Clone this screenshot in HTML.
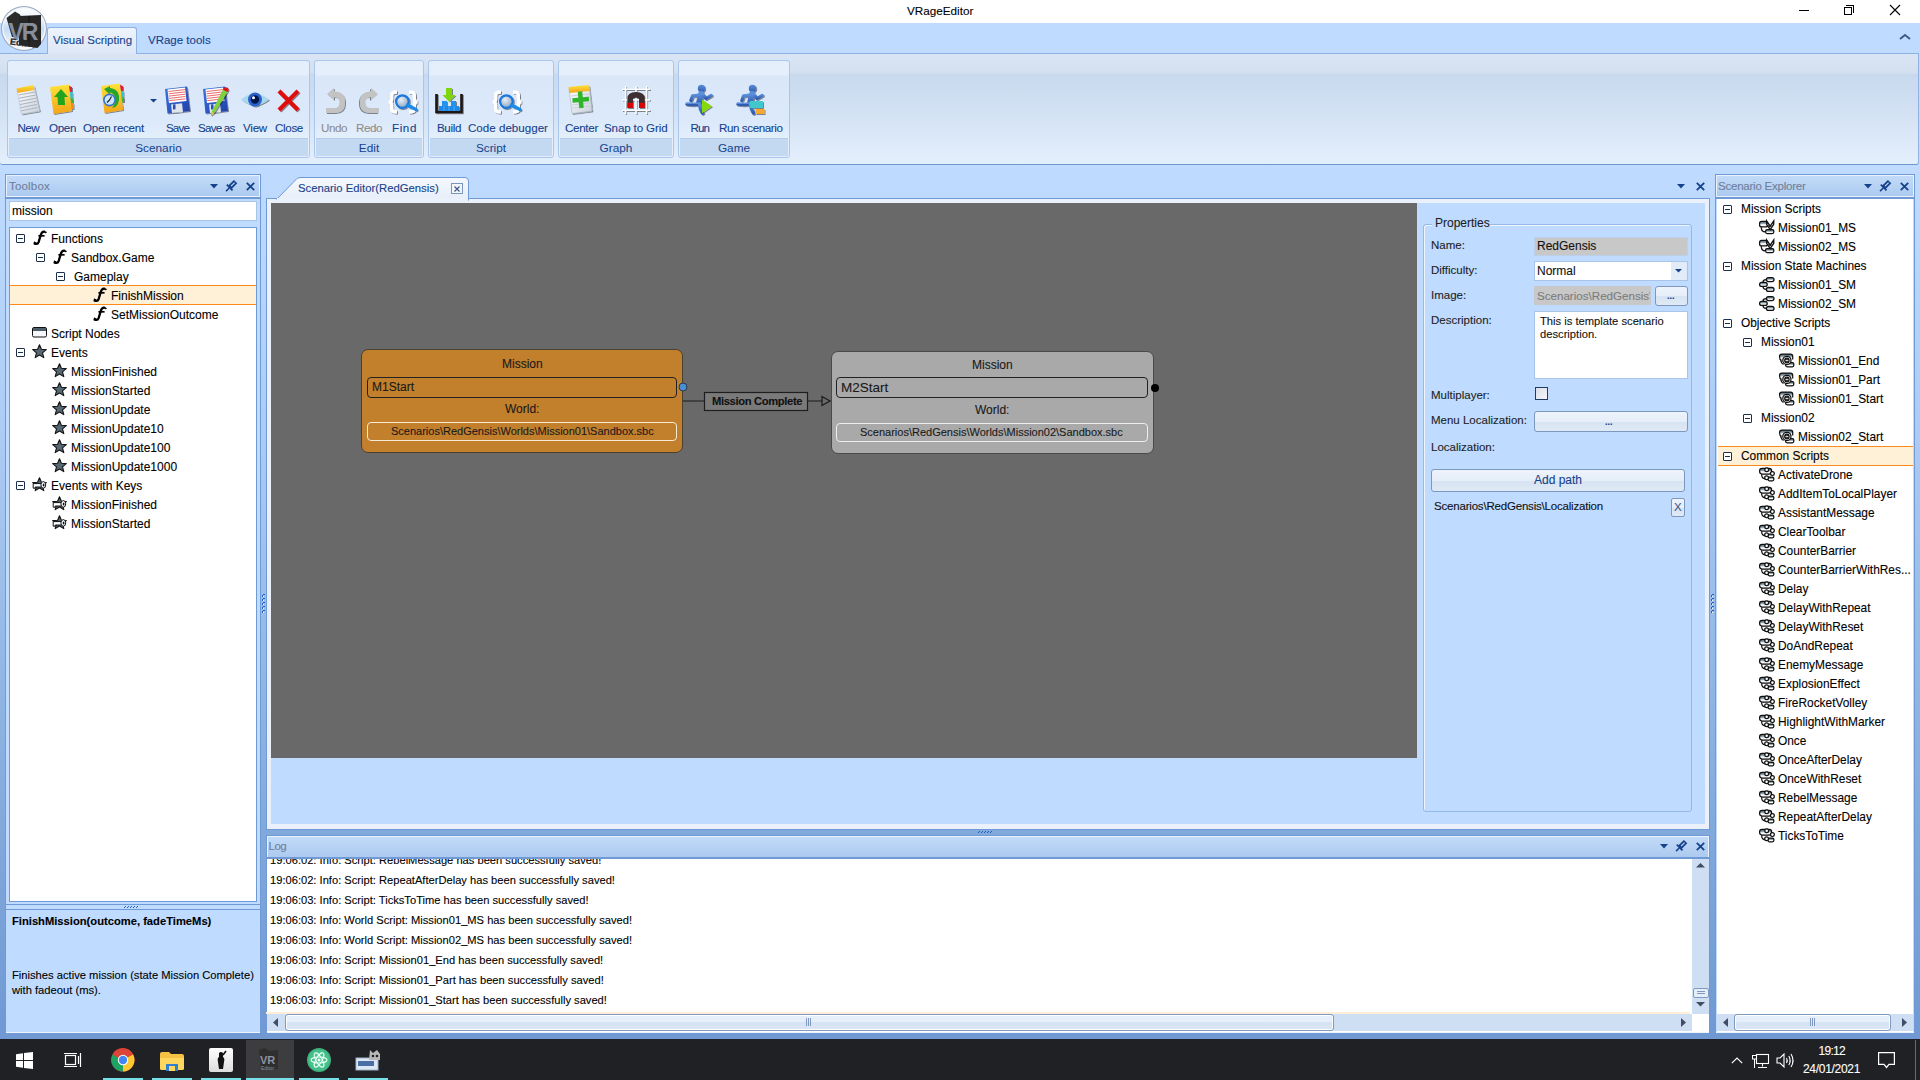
<!DOCTYPE html><html><head><meta charset="utf-8"><style>*{box-sizing:border-box;margin:0;padding:0}
html,body{width:1920px;height:1080px;overflow:hidden;background:#bfdbff;font-family:"Liberation Sans",sans-serif;font-size:12px;color:#000}
.a{position:absolute}
svg.a{overflow:visible}
.t{position:absolute;white-space:nowrap;line-height:1;-webkit-text-stroke:0.1px currentColor}
.grp{position:absolute;top:60px;height:98px;border:1px solid #a9c6ec;border-radius:3px;background:linear-gradient(#e5effc 0,#e5effc 14px,#d9e7f9 15px,#dce9fa 60px,#e5effc 78px)}
.grp .cap{position:absolute;left:1px;right:1px;bottom:1px;height:18px;background:#c3d8f1;border-top:1px solid #b5cdea;color:#15428b;text-align:center;font-size:11.8px;line-height:19px}
.btn{position:absolute;top:122px;color:#15428b;font-size:11.5px;line-height:1;white-space:nowrap}
.dis{color:#8d8d8d}
.pcap{position:absolute;height:23px;border:1px solid #6f9ad6;border-bottom:none;background:linear-gradient(#c3dbf9,#abc9ef)}
.pcap .inner{position:absolute;left:0;top:0;right:0;bottom:0;border:1px solid #e8f1fc;border-bottom:1px solid #e8f1fc}
.exp{position:absolute;width:9px;height:9px;border:1px solid #1b2f4a;border-radius:1px;background:#fff}
.exp:after{content:"";position:absolute;left:1px;top:3px;width:5px;height:1px;background:#1b2f4a}
.tr{position:absolute;white-space:nowrap;font-size:12.2px;line-height:1}
.log{position:absolute;left:270px;font-size:11.2px;line-height:1;white-space:nowrap;color:#000}
.ff{position:absolute;font-family:"Liberation Serif",serif;font-style:italic;font-weight:bold;font-size:19px;line-height:1}
</style></head><body>
<div class="a" style="left:0px;top:0px;width:1920px;height:23px;background:#fff"></div>
<div class="t" style="left:907px;top:5px;font-size:11.7px">VRageEditor</div>
<div class="a" style="left:1799px;top:10px;width:10px;height:1px;background:#000"></div>
<div class="a" style="left:1844px;top:7px;width:8px;height:8px;border:1px solid #000"></div>
<div class="a" style="left:1846px;top:5px;width:8px;height:8px;border-top:1px solid #000;border-right:1px solid #000"></div>
<svg class="a" style="left:1889px;top:4px;" width="12" height="12" viewBox="0 0 12 12"><path d="M1 1L11 11M11 1L1 11" stroke="#000" stroke-width="1.1"/></svg>
<div class="a" style="left:0px;top:23px;width:1920px;height:30px;background:#bfdbff"></div>
<div class="a" style="left:47px;top:27px;width:90px;height:27px;border:1px solid #8db2e3;border-bottom:none;border-radius:3px 3px 0 0;background:linear-gradient(#eef4fc,#dce7f5)"></div>
<div class="t" style="left:53px;top:35px;font-size:11.5px;color:#15428b">Visual Scripting</div>
<div class="t" style="left:148px;top:35px;font-size:11.5px;color:#15428b">VRage tools</div>
<svg class="a" style="left:1899px;top:33px;" width="12" height="8" viewBox="0 0 12 8"><path d="M1 6L6 2L11 6" stroke="#3b5a88" stroke-width="2" fill="none"/></svg>
<div class="a" style="left:0px;top:53px;width:1919px;height:112px;border-top:1px solid #8db2e3;border-bottom:1px solid #6f96cc;border-right:1px solid #8db2e3;border-radius:0 0 3px 3px;background:linear-gradient(#dae5f4 0,#d3e0f0 19px,#c8d9ee 20px,#d3e2f4 60px,#e4effc 110px)"></div>
<div class="a" style="left:48px;top:53px;width:88px;height:1px;background:#dce7f5"></div>
<div class="grp" style="left:7px;width:303px"><div class="cap">Scenario</div></div>
<div class="grp" style="left:314px;width:110px"><div class="cap">Edit</div></div>
<div class="grp" style="left:428px;width:126px"><div class="cap">Script</div></div>
<div class="grp" style="left:558px;width:116px"><div class="cap">Graph</div></div>
<div class="grp" style="left:678px;width:112px"><div class="cap">Game</div></div>
<div class="a" style="left:1px;top:6px;width:46px;height:45px;border-radius:50%;border:1.5px solid #97a6bf;box-shadow:inset 0 0 0 1.5px #f4f7fb;background:linear-gradient(#ffffff 0,#e9f1fb 30%,#c5dbf6 50%,#dbe8f8 70%,#ffffff 100%)"></div>
<div class="t" style="left:17.5px;top:122px;font-size:11.6px;color:#15428b;letter-spacing:-0.569px">New</div>
<div class="t" style="left:49px;top:122px;font-size:11.6px;color:#15428b;letter-spacing:-0.344px">Open</div>
<div class="t" style="left:83px;top:122px;font-size:11.6px;color:#15428b;letter-spacing:-0.258px">Open recent</div>
<div class="t" style="left:166px;top:122px;font-size:11.6px;color:#15428b;letter-spacing:-0.860px">Save</div>
<div class="t" style="left:198px;top:122px;font-size:11.6px;color:#15428b;letter-spacing:-0.774px">Save as</div>
<div class="t" style="left:243px;top:122px;font-size:11.6px;color:#15428b;letter-spacing:-0.234px">View</div>
<div class="t" style="left:275px;top:122px;font-size:11.6px;color:#15428b;letter-spacing:-0.332px">Close</div>
<div class="t" style="left:321px;top:122px;font-size:11.6px;color:#8d8d8d;letter-spacing:-0.433px">Undo</div>
<div class="t" style="left:356px;top:122px;font-size:11.6px;color:#8d8d8d;letter-spacing:-0.433px">Redo</div>
<div class="t" style="left:392px;top:122px;font-size:11.6px;color:#15428b;letter-spacing:0.608px">Find</div>
<div class="t" style="left:437px;top:122px;font-size:11.6px;color:#15428b;letter-spacing:-0.359px">Build</div>
<div class="t" style="left:468px;top:122px;font-size:11.6px;color:#15428b;letter-spacing:0.002px">Code debugger</div>
<div class="t" style="left:565px;top:122px;font-size:11.6px;color:#15428b;letter-spacing:-0.303px">Center</div>
<div class="t" style="left:604px;top:122px;font-size:11.6px;color:#15428b;letter-spacing:-0.136px">Snap to Grid</div>
<div class="t" style="left:690.5px;top:122px;font-size:11.6px;color:#15428b;letter-spacing:-0.927px">Run</div>
<div class="t" style="left:719px;top:122px;font-size:11.6px;color:#15428b;letter-spacing:-0.404px">Run scenario</div>
<div class="a" style="left:0px;top:165px;width:1920px;height:875px;background:linear-gradient(#bfdbff 0,#aecdf6 250px,#98bce8 450px,#7ea6da 700px,#7099d4 875px)"></div>
<div class="a" style="left:5px;top:174px;width:256px;height:859px;background:#bfdbff;border:1px solid #6f9ad6"></div>
<div class="pcap" style="left:5px;top:174px;width:256px"><div class="inner"></div></div>
<div class="a" style="left:5px;top:197px;width:256px;height:2px;background:#6f9ad6"></div>
<div class="t" style="left:9px;top:181px;font-size:11.5px;color:#6f7f9a;letter-spacing:0.194px">Toolbox</div>
<div class="a" style="left:9px;top:201px;width:248px;height:20px;background:#fff;border:1px solid #a9c4e8"></div>
<div class="t" style="left:12px;top:205px;font-size:12px">mission</div>
<div class="a" style="left:9px;top:227px;width:248px;height:675px;background:#fff;border:1px solid #6f9ad6"></div>
<div class="a" style="left:6px;top:904px;width:254px;height:1px;background:#6f9ad6"></div>
<div class="a" style="left:6px;top:909px;width:254px;height:1px;background:#6f9ad6"></div>
<div class="t" style="left:12px;top:916px;font-size:11.2px;font-weight:bold">FinishMission(outcome, fadeTimeMs)</div>
<div class="t" style="left:12px;top:970px;font-size:11.2px">Finishes active mission (state Mission Complete)</div>
<div class="t" style="left:12px;top:985px;font-size:11.2px">with fadeout (ms).</div>
<div class="a" style="left:266px;top:198px;width:1444px;height:632px;border:1px solid #6f9ad6;background:#eaf1fb"></div>
<div class="a" style="left:271px;top:203px;width:1434px;height:621px;background:#bfdbff"></div>
<div class="a" style="left:271px;top:203px;width:1146px;height:555px;background:#696969"></div>
<div class="a" style="left:266px;top:835px;width:1444px;height:198px;background:#fff;border:1px solid #6f9ad6"></div>
<div class="pcap" style="left:266px;top:835px;width:1444px"><div class="inner"></div></div>
<div class="a" style="left:266px;top:857px;width:1444px;height:2px;background:#6f9ad6"></div>
<div class="t" style="left:268.5px;top:841px;font-size:11.5px;color:#6f7f9a;letter-spacing:-0.463px">Log</div>
<div class="a" style="left:1715px;top:174px;width:200px;height:859px;background:#bfdbff;border:1px solid #6f9ad6"></div>
<div class="pcap" style="left:1715px;top:174px;width:200px"><div class="inner"></div></div>
<div class="a" style="left:1715px;top:197px;width:200px;height:2px;background:#6f9ad6"></div>
<div class="t" style="left:1718px;top:181px;font-size:11.5px;color:#6f7f9a;letter-spacing:-0.224px">Scenario Explorer</div>
<div class="a" style="left:1717px;top:199px;width:196px;height:833px;background:#fff"></div>
<div class="a" style="left:0px;top:1039px;width:1920px;height:41px;background:#1f2125"></div>
<div class="a" style="left:6px;top:1032px;width:254px;height:1px;background:#eef4fc"></div>
<div class="a" style="left:267px;top:1032px;width:1442px;height:1px;background:#eef4fc"></div>
<div class="a" style="left:1716px;top:1032px;width:198px;height:1px;background:#eef4fc"></div>
<div class="a" style="left:10px;top:285px;width:246px;height:20px;background:#fff0d8;border-top:1px solid #ff8a1c;border-bottom:1px solid #ff8a1c"></div>
<div class="exp" style="left:16px;top:234px"></div>
<svg class="a" style="left:33px;top:230px;" width="15" height="15" viewBox="0 0 15 15"><path d="M11.2 1.6Q8.6 1.4 7.6 5.5L5.6 12.2Q4.8 14.6 1.6 13.6" fill="none" stroke="#000" stroke-width="2.3" stroke-linecap="round"/><path d="M10.5 1.5Q12.6 0.8 14 2.2L12.6 3.6Q12.2 2.4 10.8 2.6Z" fill="#000"/><path d="M3 13.2Q1 13.2 0.6 12.5L1.2 11.2Q2 12.3 3.4 12.3Z" fill="#000"/><path d="M5.4 5.8H11.6" stroke="#000" stroke-width="1.7"/></svg>
<div class="t" style="left:51px;top:232.5px;font-size:12px">Functions</div>
<div class="exp" style="left:36px;top:253px"></div>
<svg class="a" style="left:53px;top:249px;" width="15" height="15" viewBox="0 0 15 15"><path d="M11.2 1.6Q8.6 1.4 7.6 5.5L5.6 12.2Q4.8 14.6 1.6 13.6" fill="none" stroke="#000" stroke-width="2.3" stroke-linecap="round"/><path d="M10.5 1.5Q12.6 0.8 14 2.2L12.6 3.6Q12.2 2.4 10.8 2.6Z" fill="#000"/><path d="M3 13.2Q1 13.2 0.6 12.5L1.2 11.2Q2 12.3 3.4 12.3Z" fill="#000"/><path d="M5.4 5.8H11.6" stroke="#000" stroke-width="1.7"/></svg>
<div class="t" style="left:71px;top:251.5px;font-size:12px">Sandbox.Game</div>
<div class="exp" style="left:56px;top:272px"></div>
<div class="t" style="left:74px;top:270.5px;font-size:12px">Gameplay</div>
<svg class="a" style="left:93px;top:287px;" width="15" height="15" viewBox="0 0 15 15"><path d="M11.2 1.6Q8.6 1.4 7.6 5.5L5.6 12.2Q4.8 14.6 1.6 13.6" fill="none" stroke="#000" stroke-width="2.3" stroke-linecap="round"/><path d="M10.5 1.5Q12.6 0.8 14 2.2L12.6 3.6Q12.2 2.4 10.8 2.6Z" fill="#000"/><path d="M3 13.2Q1 13.2 0.6 12.5L1.2 11.2Q2 12.3 3.4 12.3Z" fill="#000"/><path d="M5.4 5.8H11.6" stroke="#000" stroke-width="1.7"/></svg>
<div class="t" style="left:111px;top:289.5px;font-size:12px">FinishMission</div>
<svg class="a" style="left:93px;top:306px;" width="15" height="15" viewBox="0 0 15 15"><path d="M11.2 1.6Q8.6 1.4 7.6 5.5L5.6 12.2Q4.8 14.6 1.6 13.6" fill="none" stroke="#000" stroke-width="2.3" stroke-linecap="round"/><path d="M10.5 1.5Q12.6 0.8 14 2.2L12.6 3.6Q12.2 2.4 10.8 2.6Z" fill="#000"/><path d="M3 13.2Q1 13.2 0.6 12.5L1.2 11.2Q2 12.3 3.4 12.3Z" fill="#000"/><path d="M5.4 5.8H11.6" stroke="#000" stroke-width="1.7"/></svg>
<div class="t" style="left:111px;top:308.5px;font-size:12px">SetMissionOutcome</div>
<svg class="a" style="left:32px;top:327px;" width="15" height="11" viewBox="0 0 15 11"><rect x="0.5" y="0.5" width="14" height="9.5" rx="1.5" fill="#f4f8fa" stroke="#111"/><rect x="1" y="1" width="13" height="3" fill="#4d5e68"/></svg>
<div class="t" style="left:51px;top:327.5px;font-size:12px">Script Nodes</div>
<div class="exp" style="left:16px;top:348px"></div>
<svg class="a" style="left:32px;top:344px;" width="15" height="15" viewBox="0 0 15 15"><path d="M7.5 0.8L9.4 5.3L14.3 5.6L10.5 8.8L11.8 13.6L7.5 11L3.2 13.6L4.5 8.8L0.7 5.6L5.6 5.3Z" fill="#566873" stroke="#111" stroke-width="1.1" stroke-linejoin="round"/></svg>
<div class="t" style="left:51px;top:346.5px;font-size:12px">Events</div>
<svg class="a" style="left:52px;top:363px;" width="15" height="15" viewBox="0 0 15 15"><path d="M7.5 0.8L9.4 5.3L14.3 5.6L10.5 8.8L11.8 13.6L7.5 11L3.2 13.6L4.5 8.8L0.7 5.6L5.6 5.3Z" fill="#566873" stroke="#111" stroke-width="1.1" stroke-linejoin="round"/></svg>
<div class="t" style="left:71px;top:365.5px;font-size:12px">MissionFinished</div>
<svg class="a" style="left:52px;top:382px;" width="15" height="15" viewBox="0 0 15 15"><path d="M7.5 0.8L9.4 5.3L14.3 5.6L10.5 8.8L11.8 13.6L7.5 11L3.2 13.6L4.5 8.8L0.7 5.6L5.6 5.3Z" fill="#566873" stroke="#111" stroke-width="1.1" stroke-linejoin="round"/></svg>
<div class="t" style="left:71px;top:384.5px;font-size:12px">MissionStarted</div>
<svg class="a" style="left:52px;top:401px;" width="15" height="15" viewBox="0 0 15 15"><path d="M7.5 0.8L9.4 5.3L14.3 5.6L10.5 8.8L11.8 13.6L7.5 11L3.2 13.6L4.5 8.8L0.7 5.6L5.6 5.3Z" fill="#566873" stroke="#111" stroke-width="1.1" stroke-linejoin="round"/></svg>
<div class="t" style="left:71px;top:403.5px;font-size:12px">MissionUpdate</div>
<svg class="a" style="left:52px;top:420px;" width="15" height="15" viewBox="0 0 15 15"><path d="M7.5 0.8L9.4 5.3L14.3 5.6L10.5 8.8L11.8 13.6L7.5 11L3.2 13.6L4.5 8.8L0.7 5.6L5.6 5.3Z" fill="#566873" stroke="#111" stroke-width="1.1" stroke-linejoin="round"/></svg>
<div class="t" style="left:71px;top:422.5px;font-size:12px">MissionUpdate10</div>
<svg class="a" style="left:52px;top:439px;" width="15" height="15" viewBox="0 0 15 15"><path d="M7.5 0.8L9.4 5.3L14.3 5.6L10.5 8.8L11.8 13.6L7.5 11L3.2 13.6L4.5 8.8L0.7 5.6L5.6 5.3Z" fill="#566873" stroke="#111" stroke-width="1.1" stroke-linejoin="round"/></svg>
<div class="t" style="left:71px;top:441.5px;font-size:12px">MissionUpdate100</div>
<svg class="a" style="left:52px;top:458px;" width="15" height="15" viewBox="0 0 15 15"><path d="M7.5 0.8L9.4 5.3L14.3 5.6L10.5 8.8L11.8 13.6L7.5 11L3.2 13.6L4.5 8.8L0.7 5.6L5.6 5.3Z" fill="#566873" stroke="#111" stroke-width="1.1" stroke-linejoin="round"/></svg>
<div class="t" style="left:71px;top:460.5px;font-size:12px">MissionUpdate1000</div>
<div class="exp" style="left:16px;top:481px"></div>
<svg class="a" style="left:32px;top:477px;" width="15" height="15" viewBox="0 0 15 15"><path d="M7.5 0.8L9.4 5.3L14.3 5.6L10.5 8.8L11.8 13.6L7.5 11L3.2 13.6L4.5 8.8L0.7 5.6L5.6 5.3Z" fill="#566873" stroke="#111" stroke-width="1.1" stroke-linejoin="round"/><path d="M1.2 6.6H10V10H3.2V11.2H1.2Z" fill="#fff" stroke="#111" stroke-width="1"/><ellipse cx="11.3" cy="7.9" rx="2.4" ry="3.3" fill="#fff" stroke="#111" stroke-width="1"/><ellipse cx="11.6" cy="7.9" rx="0.9" ry="1.5" fill="#111"/></svg>
<div class="t" style="left:51px;top:479.5px;font-size:12px">Events with Keys</div>
<svg class="a" style="left:52px;top:496px;" width="15" height="15" viewBox="0 0 15 15"><path d="M7.5 0.8L9.4 5.3L14.3 5.6L10.5 8.8L11.8 13.6L7.5 11L3.2 13.6L4.5 8.8L0.7 5.6L5.6 5.3Z" fill="#566873" stroke="#111" stroke-width="1.1" stroke-linejoin="round"/><path d="M1.2 6.6H10V10H3.2V11.2H1.2Z" fill="#fff" stroke="#111" stroke-width="1"/><ellipse cx="11.3" cy="7.9" rx="2.4" ry="3.3" fill="#fff" stroke="#111" stroke-width="1"/><ellipse cx="11.6" cy="7.9" rx="0.9" ry="1.5" fill="#111"/></svg>
<div class="t" style="left:71px;top:498.5px;font-size:12px">MissionFinished</div>
<svg class="a" style="left:52px;top:515px;" width="15" height="15" viewBox="0 0 15 15"><path d="M7.5 0.8L9.4 5.3L14.3 5.6L10.5 8.8L11.8 13.6L7.5 11L3.2 13.6L4.5 8.8L0.7 5.6L5.6 5.3Z" fill="#566873" stroke="#111" stroke-width="1.1" stroke-linejoin="round"/><path d="M1.2 6.6H10V10H3.2V11.2H1.2Z" fill="#fff" stroke="#111" stroke-width="1"/><ellipse cx="11.3" cy="7.9" rx="2.4" ry="3.3" fill="#fff" stroke="#111" stroke-width="1"/><ellipse cx="11.6" cy="7.9" rx="0.9" ry="1.5" fill="#111"/></svg>
<div class="t" style="left:71px;top:517.5px;font-size:12px">MissionStarted</div>
<svg class="a" width="0" height="0" style="left:0;top:0"><defs><linearGradient id="tg" x1="0" y1="0" x2="0" y2="1"><stop offset="0" stop-color="#3f5864"/><stop offset="0.45" stop-color="#9fb3bc"/><stop offset="0.6" stop-color="#ffffff"/><stop offset="1" stop-color="#e6e6e6"/></linearGradient></defs></svg>
<div class="a" style="left:1718px;top:446px;width:195px;height:20px;background:#fff0d8;border-top:1px solid #ff8a1c;border-bottom:1px solid #ff8a1c"></div>
<div class="exp" style="left:1723px;top:205px"></div>
<div class="t" style="left:1741px;top:204px;font-size:11.9px">Mission Scripts</div>
<svg class="a" style="left:1759px;top:220px;" width="16" height="14" viewBox="0 0 16 14"><rect x="0.6" y="1.3" width="8" height="5.6" rx="2" fill="url(#tg)" stroke="#111" stroke-width="1.25"/><path d="M2.3 7.2Q2.3 11.8 6.2 11.8" fill="none" stroke="#111" stroke-width="1.25"/><rect x="6.6" y="9.6" width="8.2" height="4" rx="1.5" fill="url(#tg)" stroke="#111" stroke-width="1.25"/><path d="M7.6 0.8L11.2 6.2L14.8 0.8V4.4L11.2 9.6L7.6 4.4Z" fill="#fff" stroke="#111" stroke-width="1.25"/><path d="M8 3.4L11.2 8M14.4 3.4L11.2 8" stroke="#111" stroke-width="1.4" stroke-dasharray="1 0.8"/></svg>
<div class="t" style="left:1778px;top:223px;font-size:11.9px">Mission01_MS</div>
<svg class="a" style="left:1759px;top:239px;" width="16" height="14" viewBox="0 0 16 14"><rect x="0.6" y="1.3" width="8" height="5.6" rx="2" fill="url(#tg)" stroke="#111" stroke-width="1.25"/><path d="M2.3 7.2Q2.3 11.8 6.2 11.8" fill="none" stroke="#111" stroke-width="1.25"/><rect x="6.6" y="9.6" width="8.2" height="4" rx="1.5" fill="url(#tg)" stroke="#111" stroke-width="1.25"/><path d="M7.6 0.8L11.2 6.2L14.8 0.8V4.4L11.2 9.6L7.6 4.4Z" fill="#fff" stroke="#111" stroke-width="1.25"/><path d="M8 3.4L11.2 8M14.4 3.4L11.2 8" stroke="#111" stroke-width="1.4" stroke-dasharray="1 0.8"/></svg>
<div class="t" style="left:1778px;top:242px;font-size:11.9px">Mission02_MS</div>
<div class="exp" style="left:1723px;top:262px"></div>
<div class="t" style="left:1741px;top:261px;font-size:11.9px">Mission State Machines</div>
<svg class="a" style="left:1759px;top:277px;" width="16" height="15" viewBox="0 0 16 15"><rect x="7.4" y="0.6" width="7.6" height="4" rx="2" fill="url(#tg)" stroke="#111" stroke-width="1.25"/><rect x="0.6" y="5.4" width="7.6" height="4" rx="2" fill="url(#tg)" stroke="#111" stroke-width="1.25"/><rect x="7.4" y="10.4" width="7.6" height="4" rx="2" fill="url(#tg)" stroke="#111" stroke-width="1.25"/><path d="M4 5.2Q4 2.6 7.2 2.6M4 9.6Q4 12.4 7.2 12.4" fill="none" stroke="#111" stroke-width="1.25"/></svg>
<div class="t" style="left:1778px;top:280px;font-size:11.9px">Mission01_SM</div>
<svg class="a" style="left:1759px;top:296px;" width="16" height="15" viewBox="0 0 16 15"><rect x="7.4" y="0.6" width="7.6" height="4" rx="2" fill="url(#tg)" stroke="#111" stroke-width="1.25"/><rect x="0.6" y="5.4" width="7.6" height="4" rx="2" fill="url(#tg)" stroke="#111" stroke-width="1.25"/><rect x="7.4" y="10.4" width="7.6" height="4" rx="2" fill="url(#tg)" stroke="#111" stroke-width="1.25"/><path d="M4 5.2Q4 2.6 7.2 2.6M4 9.6Q4 12.4 7.2 12.4" fill="none" stroke="#111" stroke-width="1.25"/></svg>
<div class="t" style="left:1778px;top:299px;font-size:11.9px">Mission02_SM</div>
<div class="exp" style="left:1723px;top:319px"></div>
<div class="t" style="left:1741px;top:318px;font-size:11.9px">Objective Scripts</div>
<div class="exp" style="left:1743px;top:338px"></div>
<div class="t" style="left:1761px;top:337px;font-size:11.9px">Mission01</div>
<svg class="a" style="left:1779px;top:353px;" width="16" height="15" viewBox="0 0 16 15"><path d="M2.4 7.2Q0.6 6.8 0.6 4.2V3.3Q0.6 1.1 2.8 1.1H11.6Q13.7 1.1 13.7 3.3V6.6" fill="url(#tg)" stroke="#111" stroke-width="1.25"/><path d="M1.8 7Q2.2 10.8 4.6 11.4" fill="none" stroke="#111" stroke-width="1.25"/><rect x="6.6" y="9.6" width="8.2" height="4.2" rx="1.5" fill="url(#tg)" stroke="#111" stroke-width="1.25"/><circle cx="7.9" cy="7.4" r="4.1" fill="#fff" stroke="#111" stroke-width="1.25"/><ellipse cx="7.9" cy="7.4" rx="2.2" ry="2.4" fill="none" stroke="#111" stroke-width="1.25"/><path d="M6 6.6H9.8M6 8.4H9.8" stroke="#111" stroke-width="0.9"/></svg>
<div class="t" style="left:1798px;top:356px;font-size:11.9px">Mission01_End</div>
<svg class="a" style="left:1779px;top:372px;" width="16" height="15" viewBox="0 0 16 15"><path d="M2.4 7.2Q0.6 6.8 0.6 4.2V3.3Q0.6 1.1 2.8 1.1H11.6Q13.7 1.1 13.7 3.3V6.6" fill="url(#tg)" stroke="#111" stroke-width="1.25"/><path d="M1.8 7Q2.2 10.8 4.6 11.4" fill="none" stroke="#111" stroke-width="1.25"/><rect x="6.6" y="9.6" width="8.2" height="4.2" rx="1.5" fill="url(#tg)" stroke="#111" stroke-width="1.25"/><circle cx="7.9" cy="7.4" r="4.1" fill="#fff" stroke="#111" stroke-width="1.25"/><ellipse cx="7.9" cy="7.4" rx="2.2" ry="2.4" fill="none" stroke="#111" stroke-width="1.25"/><path d="M6 6.6H9.8M6 8.4H9.8" stroke="#111" stroke-width="0.9"/></svg>
<div class="t" style="left:1798px;top:375px;font-size:11.9px">Mission01_Part</div>
<svg class="a" style="left:1779px;top:391px;" width="16" height="15" viewBox="0 0 16 15"><path d="M2.4 7.2Q0.6 6.8 0.6 4.2V3.3Q0.6 1.1 2.8 1.1H11.6Q13.7 1.1 13.7 3.3V6.6" fill="url(#tg)" stroke="#111" stroke-width="1.25"/><path d="M1.8 7Q2.2 10.8 4.6 11.4" fill="none" stroke="#111" stroke-width="1.25"/><rect x="6.6" y="9.6" width="8.2" height="4.2" rx="1.5" fill="url(#tg)" stroke="#111" stroke-width="1.25"/><circle cx="7.9" cy="7.4" r="4.1" fill="#fff" stroke="#111" stroke-width="1.25"/><ellipse cx="7.9" cy="7.4" rx="2.2" ry="2.4" fill="none" stroke="#111" stroke-width="1.25"/><path d="M6 6.6H9.8M6 8.4H9.8" stroke="#111" stroke-width="0.9"/></svg>
<div class="t" style="left:1798px;top:394px;font-size:11.9px">Mission01_Start</div>
<div class="exp" style="left:1743px;top:414px"></div>
<div class="t" style="left:1761px;top:413px;font-size:11.9px">Mission02</div>
<svg class="a" style="left:1779px;top:429px;" width="16" height="15" viewBox="0 0 16 15"><path d="M2.4 7.2Q0.6 6.8 0.6 4.2V3.3Q0.6 1.1 2.8 1.1H11.6Q13.7 1.1 13.7 3.3V6.6" fill="url(#tg)" stroke="#111" stroke-width="1.25"/><path d="M1.8 7Q2.2 10.8 4.6 11.4" fill="none" stroke="#111" stroke-width="1.25"/><rect x="6.6" y="9.6" width="8.2" height="4.2" rx="1.5" fill="url(#tg)" stroke="#111" stroke-width="1.25"/><circle cx="7.9" cy="7.4" r="4.1" fill="#fff" stroke="#111" stroke-width="1.25"/><ellipse cx="7.9" cy="7.4" rx="2.2" ry="2.4" fill="none" stroke="#111" stroke-width="1.25"/><path d="M6 6.6H9.8M6 8.4H9.8" stroke="#111" stroke-width="0.9"/></svg>
<div class="t" style="left:1798px;top:432px;font-size:11.9px">Mission02_Start</div>
<div class="exp" style="left:1723px;top:452px"></div>
<div class="t" style="left:1741px;top:451px;font-size:11.9px">Common Scripts</div>
<svg class="a" style="left:1759px;top:467px;" width="16" height="15" viewBox="0 0 16 15"><rect x="0.6" y="1.4" width="12" height="5.6" rx="2.4" fill="url(#tg)" stroke="#111" stroke-width="1.25"/><path d="M2.6 7.2Q2.6 11.6 6 11.6" fill="none" stroke="#111" stroke-width="1.25"/><rect x="9" y="10" width="5.8" height="3.8" rx="1.2" fill="url(#tg)" stroke="#111" stroke-width="1.25"/><circle cx="7.7" cy="2.8" r="1.9" fill="#fff" stroke="#111" stroke-width="1.25"/><circle cx="13.4" cy="6.6" r="1.9" fill="#fff" stroke="#111" stroke-width="1.25"/><circle cx="7.6" cy="10.8" r="1.9" fill="#fff" stroke="#111" stroke-width="1.25"/></svg>
<div class="t" style="left:1778px;top:470px;font-size:11.9px">ActivateDrone</div>
<svg class="a" style="left:1759px;top:486px;" width="16" height="15" viewBox="0 0 16 15"><rect x="0.6" y="1.4" width="12" height="5.6" rx="2.4" fill="url(#tg)" stroke="#111" stroke-width="1.25"/><path d="M2.6 7.2Q2.6 11.6 6 11.6" fill="none" stroke="#111" stroke-width="1.25"/><rect x="9" y="10" width="5.8" height="3.8" rx="1.2" fill="url(#tg)" stroke="#111" stroke-width="1.25"/><circle cx="7.7" cy="2.8" r="1.9" fill="#fff" stroke="#111" stroke-width="1.25"/><circle cx="13.4" cy="6.6" r="1.9" fill="#fff" stroke="#111" stroke-width="1.25"/><circle cx="7.6" cy="10.8" r="1.9" fill="#fff" stroke="#111" stroke-width="1.25"/></svg>
<div class="t" style="left:1778px;top:489px;font-size:11.9px">AddItemToLocalPlayer</div>
<svg class="a" style="left:1759px;top:505px;" width="16" height="15" viewBox="0 0 16 15"><rect x="0.6" y="1.4" width="12" height="5.6" rx="2.4" fill="url(#tg)" stroke="#111" stroke-width="1.25"/><path d="M2.6 7.2Q2.6 11.6 6 11.6" fill="none" stroke="#111" stroke-width="1.25"/><rect x="9" y="10" width="5.8" height="3.8" rx="1.2" fill="url(#tg)" stroke="#111" stroke-width="1.25"/><circle cx="7.7" cy="2.8" r="1.9" fill="#fff" stroke="#111" stroke-width="1.25"/><circle cx="13.4" cy="6.6" r="1.9" fill="#fff" stroke="#111" stroke-width="1.25"/><circle cx="7.6" cy="10.8" r="1.9" fill="#fff" stroke="#111" stroke-width="1.25"/></svg>
<div class="t" style="left:1778px;top:508px;font-size:11.9px">AssistantMessage</div>
<svg class="a" style="left:1759px;top:524px;" width="16" height="15" viewBox="0 0 16 15"><rect x="0.6" y="1.4" width="12" height="5.6" rx="2.4" fill="url(#tg)" stroke="#111" stroke-width="1.25"/><path d="M2.6 7.2Q2.6 11.6 6 11.6" fill="none" stroke="#111" stroke-width="1.25"/><rect x="9" y="10" width="5.8" height="3.8" rx="1.2" fill="url(#tg)" stroke="#111" stroke-width="1.25"/><circle cx="7.7" cy="2.8" r="1.9" fill="#fff" stroke="#111" stroke-width="1.25"/><circle cx="13.4" cy="6.6" r="1.9" fill="#fff" stroke="#111" stroke-width="1.25"/><circle cx="7.6" cy="10.8" r="1.9" fill="#fff" stroke="#111" stroke-width="1.25"/></svg>
<div class="t" style="left:1778px;top:527px;font-size:11.9px">ClearToolbar</div>
<svg class="a" style="left:1759px;top:543px;" width="16" height="15" viewBox="0 0 16 15"><rect x="0.6" y="1.4" width="12" height="5.6" rx="2.4" fill="url(#tg)" stroke="#111" stroke-width="1.25"/><path d="M2.6 7.2Q2.6 11.6 6 11.6" fill="none" stroke="#111" stroke-width="1.25"/><rect x="9" y="10" width="5.8" height="3.8" rx="1.2" fill="url(#tg)" stroke="#111" stroke-width="1.25"/><circle cx="7.7" cy="2.8" r="1.9" fill="#fff" stroke="#111" stroke-width="1.25"/><circle cx="13.4" cy="6.6" r="1.9" fill="#fff" stroke="#111" stroke-width="1.25"/><circle cx="7.6" cy="10.8" r="1.9" fill="#fff" stroke="#111" stroke-width="1.25"/></svg>
<div class="t" style="left:1778px;top:546px;font-size:11.9px">CounterBarrier</div>
<svg class="a" style="left:1759px;top:562px;" width="16" height="15" viewBox="0 0 16 15"><rect x="0.6" y="1.4" width="12" height="5.6" rx="2.4" fill="url(#tg)" stroke="#111" stroke-width="1.25"/><path d="M2.6 7.2Q2.6 11.6 6 11.6" fill="none" stroke="#111" stroke-width="1.25"/><rect x="9" y="10" width="5.8" height="3.8" rx="1.2" fill="url(#tg)" stroke="#111" stroke-width="1.25"/><circle cx="7.7" cy="2.8" r="1.9" fill="#fff" stroke="#111" stroke-width="1.25"/><circle cx="13.4" cy="6.6" r="1.9" fill="#fff" stroke="#111" stroke-width="1.25"/><circle cx="7.6" cy="10.8" r="1.9" fill="#fff" stroke="#111" stroke-width="1.25"/></svg>
<div class="t" style="left:1778px;top:565px;font-size:11.9px">CounterBarrierWithRes...</div>
<svg class="a" style="left:1759px;top:581px;" width="16" height="15" viewBox="0 0 16 15"><rect x="0.6" y="1.4" width="12" height="5.6" rx="2.4" fill="url(#tg)" stroke="#111" stroke-width="1.25"/><path d="M2.6 7.2Q2.6 11.6 6 11.6" fill="none" stroke="#111" stroke-width="1.25"/><rect x="9" y="10" width="5.8" height="3.8" rx="1.2" fill="url(#tg)" stroke="#111" stroke-width="1.25"/><circle cx="7.7" cy="2.8" r="1.9" fill="#fff" stroke="#111" stroke-width="1.25"/><circle cx="13.4" cy="6.6" r="1.9" fill="#fff" stroke="#111" stroke-width="1.25"/><circle cx="7.6" cy="10.8" r="1.9" fill="#fff" stroke="#111" stroke-width="1.25"/></svg>
<div class="t" style="left:1778px;top:584px;font-size:11.9px">Delay</div>
<svg class="a" style="left:1759px;top:600px;" width="16" height="15" viewBox="0 0 16 15"><rect x="0.6" y="1.4" width="12" height="5.6" rx="2.4" fill="url(#tg)" stroke="#111" stroke-width="1.25"/><path d="M2.6 7.2Q2.6 11.6 6 11.6" fill="none" stroke="#111" stroke-width="1.25"/><rect x="9" y="10" width="5.8" height="3.8" rx="1.2" fill="url(#tg)" stroke="#111" stroke-width="1.25"/><circle cx="7.7" cy="2.8" r="1.9" fill="#fff" stroke="#111" stroke-width="1.25"/><circle cx="13.4" cy="6.6" r="1.9" fill="#fff" stroke="#111" stroke-width="1.25"/><circle cx="7.6" cy="10.8" r="1.9" fill="#fff" stroke="#111" stroke-width="1.25"/></svg>
<div class="t" style="left:1778px;top:603px;font-size:11.9px">DelayWithRepeat</div>
<svg class="a" style="left:1759px;top:619px;" width="16" height="15" viewBox="0 0 16 15"><rect x="0.6" y="1.4" width="12" height="5.6" rx="2.4" fill="url(#tg)" stroke="#111" stroke-width="1.25"/><path d="M2.6 7.2Q2.6 11.6 6 11.6" fill="none" stroke="#111" stroke-width="1.25"/><rect x="9" y="10" width="5.8" height="3.8" rx="1.2" fill="url(#tg)" stroke="#111" stroke-width="1.25"/><circle cx="7.7" cy="2.8" r="1.9" fill="#fff" stroke="#111" stroke-width="1.25"/><circle cx="13.4" cy="6.6" r="1.9" fill="#fff" stroke="#111" stroke-width="1.25"/><circle cx="7.6" cy="10.8" r="1.9" fill="#fff" stroke="#111" stroke-width="1.25"/></svg>
<div class="t" style="left:1778px;top:622px;font-size:11.9px">DelayWithReset</div>
<svg class="a" style="left:1759px;top:638px;" width="16" height="15" viewBox="0 0 16 15"><rect x="0.6" y="1.4" width="12" height="5.6" rx="2.4" fill="url(#tg)" stroke="#111" stroke-width="1.25"/><path d="M2.6 7.2Q2.6 11.6 6 11.6" fill="none" stroke="#111" stroke-width="1.25"/><rect x="9" y="10" width="5.8" height="3.8" rx="1.2" fill="url(#tg)" stroke="#111" stroke-width="1.25"/><circle cx="7.7" cy="2.8" r="1.9" fill="#fff" stroke="#111" stroke-width="1.25"/><circle cx="13.4" cy="6.6" r="1.9" fill="#fff" stroke="#111" stroke-width="1.25"/><circle cx="7.6" cy="10.8" r="1.9" fill="#fff" stroke="#111" stroke-width="1.25"/></svg>
<div class="t" style="left:1778px;top:641px;font-size:11.9px">DoAndRepeat</div>
<svg class="a" style="left:1759px;top:657px;" width="16" height="15" viewBox="0 0 16 15"><rect x="0.6" y="1.4" width="12" height="5.6" rx="2.4" fill="url(#tg)" stroke="#111" stroke-width="1.25"/><path d="M2.6 7.2Q2.6 11.6 6 11.6" fill="none" stroke="#111" stroke-width="1.25"/><rect x="9" y="10" width="5.8" height="3.8" rx="1.2" fill="url(#tg)" stroke="#111" stroke-width="1.25"/><circle cx="7.7" cy="2.8" r="1.9" fill="#fff" stroke="#111" stroke-width="1.25"/><circle cx="13.4" cy="6.6" r="1.9" fill="#fff" stroke="#111" stroke-width="1.25"/><circle cx="7.6" cy="10.8" r="1.9" fill="#fff" stroke="#111" stroke-width="1.25"/></svg>
<div class="t" style="left:1778px;top:660px;font-size:11.9px">EnemyMessage</div>
<svg class="a" style="left:1759px;top:676px;" width="16" height="15" viewBox="0 0 16 15"><rect x="0.6" y="1.4" width="12" height="5.6" rx="2.4" fill="url(#tg)" stroke="#111" stroke-width="1.25"/><path d="M2.6 7.2Q2.6 11.6 6 11.6" fill="none" stroke="#111" stroke-width="1.25"/><rect x="9" y="10" width="5.8" height="3.8" rx="1.2" fill="url(#tg)" stroke="#111" stroke-width="1.25"/><circle cx="7.7" cy="2.8" r="1.9" fill="#fff" stroke="#111" stroke-width="1.25"/><circle cx="13.4" cy="6.6" r="1.9" fill="#fff" stroke="#111" stroke-width="1.25"/><circle cx="7.6" cy="10.8" r="1.9" fill="#fff" stroke="#111" stroke-width="1.25"/></svg>
<div class="t" style="left:1778px;top:679px;font-size:11.9px">ExplosionEffect</div>
<svg class="a" style="left:1759px;top:695px;" width="16" height="15" viewBox="0 0 16 15"><rect x="0.6" y="1.4" width="12" height="5.6" rx="2.4" fill="url(#tg)" stroke="#111" stroke-width="1.25"/><path d="M2.6 7.2Q2.6 11.6 6 11.6" fill="none" stroke="#111" stroke-width="1.25"/><rect x="9" y="10" width="5.8" height="3.8" rx="1.2" fill="url(#tg)" stroke="#111" stroke-width="1.25"/><circle cx="7.7" cy="2.8" r="1.9" fill="#fff" stroke="#111" stroke-width="1.25"/><circle cx="13.4" cy="6.6" r="1.9" fill="#fff" stroke="#111" stroke-width="1.25"/><circle cx="7.6" cy="10.8" r="1.9" fill="#fff" stroke="#111" stroke-width="1.25"/></svg>
<div class="t" style="left:1778px;top:698px;font-size:11.9px">FireRocketVolley</div>
<svg class="a" style="left:1759px;top:714px;" width="16" height="15" viewBox="0 0 16 15"><rect x="0.6" y="1.4" width="12" height="5.6" rx="2.4" fill="url(#tg)" stroke="#111" stroke-width="1.25"/><path d="M2.6 7.2Q2.6 11.6 6 11.6" fill="none" stroke="#111" stroke-width="1.25"/><rect x="9" y="10" width="5.8" height="3.8" rx="1.2" fill="url(#tg)" stroke="#111" stroke-width="1.25"/><circle cx="7.7" cy="2.8" r="1.9" fill="#fff" stroke="#111" stroke-width="1.25"/><circle cx="13.4" cy="6.6" r="1.9" fill="#fff" stroke="#111" stroke-width="1.25"/><circle cx="7.6" cy="10.8" r="1.9" fill="#fff" stroke="#111" stroke-width="1.25"/></svg>
<div class="t" style="left:1778px;top:717px;font-size:11.9px">HighlightWithMarker</div>
<svg class="a" style="left:1759px;top:733px;" width="16" height="15" viewBox="0 0 16 15"><rect x="0.6" y="1.4" width="12" height="5.6" rx="2.4" fill="url(#tg)" stroke="#111" stroke-width="1.25"/><path d="M2.6 7.2Q2.6 11.6 6 11.6" fill="none" stroke="#111" stroke-width="1.25"/><rect x="9" y="10" width="5.8" height="3.8" rx="1.2" fill="url(#tg)" stroke="#111" stroke-width="1.25"/><circle cx="7.7" cy="2.8" r="1.9" fill="#fff" stroke="#111" stroke-width="1.25"/><circle cx="13.4" cy="6.6" r="1.9" fill="#fff" stroke="#111" stroke-width="1.25"/><circle cx="7.6" cy="10.8" r="1.9" fill="#fff" stroke="#111" stroke-width="1.25"/></svg>
<div class="t" style="left:1778px;top:736px;font-size:11.9px">Once</div>
<svg class="a" style="left:1759px;top:752px;" width="16" height="15" viewBox="0 0 16 15"><rect x="0.6" y="1.4" width="12" height="5.6" rx="2.4" fill="url(#tg)" stroke="#111" stroke-width="1.25"/><path d="M2.6 7.2Q2.6 11.6 6 11.6" fill="none" stroke="#111" stroke-width="1.25"/><rect x="9" y="10" width="5.8" height="3.8" rx="1.2" fill="url(#tg)" stroke="#111" stroke-width="1.25"/><circle cx="7.7" cy="2.8" r="1.9" fill="#fff" stroke="#111" stroke-width="1.25"/><circle cx="13.4" cy="6.6" r="1.9" fill="#fff" stroke="#111" stroke-width="1.25"/><circle cx="7.6" cy="10.8" r="1.9" fill="#fff" stroke="#111" stroke-width="1.25"/></svg>
<div class="t" style="left:1778px;top:755px;font-size:11.9px">OnceAfterDelay</div>
<svg class="a" style="left:1759px;top:771px;" width="16" height="15" viewBox="0 0 16 15"><rect x="0.6" y="1.4" width="12" height="5.6" rx="2.4" fill="url(#tg)" stroke="#111" stroke-width="1.25"/><path d="M2.6 7.2Q2.6 11.6 6 11.6" fill="none" stroke="#111" stroke-width="1.25"/><rect x="9" y="10" width="5.8" height="3.8" rx="1.2" fill="url(#tg)" stroke="#111" stroke-width="1.25"/><circle cx="7.7" cy="2.8" r="1.9" fill="#fff" stroke="#111" stroke-width="1.25"/><circle cx="13.4" cy="6.6" r="1.9" fill="#fff" stroke="#111" stroke-width="1.25"/><circle cx="7.6" cy="10.8" r="1.9" fill="#fff" stroke="#111" stroke-width="1.25"/></svg>
<div class="t" style="left:1778px;top:774px;font-size:11.9px">OnceWithReset</div>
<svg class="a" style="left:1759px;top:790px;" width="16" height="15" viewBox="0 0 16 15"><rect x="0.6" y="1.4" width="12" height="5.6" rx="2.4" fill="url(#tg)" stroke="#111" stroke-width="1.25"/><path d="M2.6 7.2Q2.6 11.6 6 11.6" fill="none" stroke="#111" stroke-width="1.25"/><rect x="9" y="10" width="5.8" height="3.8" rx="1.2" fill="url(#tg)" stroke="#111" stroke-width="1.25"/><circle cx="7.7" cy="2.8" r="1.9" fill="#fff" stroke="#111" stroke-width="1.25"/><circle cx="13.4" cy="6.6" r="1.9" fill="#fff" stroke="#111" stroke-width="1.25"/><circle cx="7.6" cy="10.8" r="1.9" fill="#fff" stroke="#111" stroke-width="1.25"/></svg>
<div class="t" style="left:1778px;top:793px;font-size:11.9px">RebelMessage</div>
<svg class="a" style="left:1759px;top:809px;" width="16" height="15" viewBox="0 0 16 15"><rect x="0.6" y="1.4" width="12" height="5.6" rx="2.4" fill="url(#tg)" stroke="#111" stroke-width="1.25"/><path d="M2.6 7.2Q2.6 11.6 6 11.6" fill="none" stroke="#111" stroke-width="1.25"/><rect x="9" y="10" width="5.8" height="3.8" rx="1.2" fill="url(#tg)" stroke="#111" stroke-width="1.25"/><circle cx="7.7" cy="2.8" r="1.9" fill="#fff" stroke="#111" stroke-width="1.25"/><circle cx="13.4" cy="6.6" r="1.9" fill="#fff" stroke="#111" stroke-width="1.25"/><circle cx="7.6" cy="10.8" r="1.9" fill="#fff" stroke="#111" stroke-width="1.25"/></svg>
<div class="t" style="left:1778px;top:812px;font-size:11.9px">RepeatAfterDelay</div>
<svg class="a" style="left:1759px;top:828px;" width="16" height="15" viewBox="0 0 16 15"><rect x="0.6" y="1.4" width="12" height="5.6" rx="2.4" fill="url(#tg)" stroke="#111" stroke-width="1.25"/><path d="M2.6 7.2Q2.6 11.6 6 11.6" fill="none" stroke="#111" stroke-width="1.25"/><rect x="9" y="10" width="5.8" height="3.8" rx="1.2" fill="url(#tg)" stroke="#111" stroke-width="1.25"/><circle cx="7.7" cy="2.8" r="1.9" fill="#fff" stroke="#111" stroke-width="1.25"/><circle cx="13.4" cy="6.6" r="1.9" fill="#fff" stroke="#111" stroke-width="1.25"/><circle cx="7.6" cy="10.8" r="1.9" fill="#fff" stroke="#111" stroke-width="1.25"/></svg>
<div class="t" style="left:1778px;top:831px;font-size:11.9px">TicksToTime</div>
<div class="a" style="left:267px;top:859px;width:1425px;height:155px;overflow:hidden">
<div class="t" style="left:3px;top:-4.5px;font-size:11.15px">19:06:02: Info: Script: RebelMessage has been successfully saved!</div>
<div class="t" style="left:3px;top:15.5px;font-size:11.15px">19:06:02: Info: Script: RepeatAfterDelay has been successfully saved!</div>
<div class="t" style="left:3px;top:35.5px;font-size:11.15px">19:06:03: Info: Script: TicksToTime has been successfully saved!</div>
<div class="t" style="left:3px;top:55.5px;font-size:11.15px">19:06:03: Info: World Script: Mission01_MS has been successfully saved!</div>
<div class="t" style="left:3px;top:75.5px;font-size:11.15px">19:06:03: Info: World Script: Mission02_MS has been successfully saved!</div>
<div class="t" style="left:3px;top:95.5px;font-size:11.15px">19:06:03: Info: Script: Mission01_End has been successfully saved!</div>
<div class="t" style="left:3px;top:115.5px;font-size:11.15px">19:06:03: Info: Script: Mission01_Part has been successfully saved!</div>
<div class="t" style="left:3px;top:135.5px;font-size:11.15px">19:06:03: Info: Script: Mission01_Start has been successfully saved!</div>
</div>
<svg class="a" style="left:210px;top:184px;" width="8" height="5" viewBox="0 0 8 5"><path d="M0 0H8L4 4.5Z" fill="#15428b"/></svg>
<svg class="a" style="left:225px;top:179px;" width="13" height="13" viewBox="0 0 13 13"><g transform="rotate(-45 7.2 6)"><rect x="4" y="3.6" width="8" height="4.8" fill="#15428b"/><rect x="5.6" y="5.4" width="5" height="1.2" fill="#c6dcf6"/><path d="M3.6 2V10" stroke="#15428b" stroke-width="1.8"/><path d="M3 6H-1.5" stroke="#15428b" stroke-width="1.5"/></g></svg>
<svg class="a" style="left:246px;top:182px;" width="9" height="9" viewBox="0 0 9 9"><path d="M0.8 0.8L8.2 8.2M8.2 0.8L0.8 8.2" stroke="#15428b" stroke-width="1.8"/></svg>
<svg class="a" style="left:1864px;top:184px;" width="8" height="5" viewBox="0 0 8 5"><path d="M0 0H8L4 4.5Z" fill="#15428b"/></svg>
<svg class="a" style="left:1879px;top:179px;" width="13" height="13" viewBox="0 0 13 13"><g transform="rotate(-45 7.2 6)"><rect x="4" y="3.6" width="8" height="4.8" fill="#15428b"/><rect x="5.6" y="5.4" width="5" height="1.2" fill="#c6dcf6"/><path d="M3.6 2V10" stroke="#15428b" stroke-width="1.8"/><path d="M3 6H-1.5" stroke="#15428b" stroke-width="1.5"/></g></svg>
<svg class="a" style="left:1900px;top:182px;" width="9" height="9" viewBox="0 0 9 9"><path d="M0.8 0.8L8.2 8.2M8.2 0.8L0.8 8.2" stroke="#15428b" stroke-width="1.8"/></svg>
<svg class="a" style="left:1660px;top:844px;" width="8" height="5" viewBox="0 0 8 5"><path d="M0 0H8L4 4.5Z" fill="#15428b"/></svg>
<svg class="a" style="left:1675px;top:839px;" width="13" height="13" viewBox="0 0 13 13"><g transform="rotate(-45 7.2 6)"><rect x="4" y="3.6" width="8" height="4.8" fill="#15428b"/><rect x="5.6" y="5.4" width="5" height="1.2" fill="#c6dcf6"/><path d="M3.6 2V10" stroke="#15428b" stroke-width="1.8"/><path d="M3 6H-1.5" stroke="#15428b" stroke-width="1.5"/></g></svg>
<svg class="a" style="left:1696px;top:842px;" width="9" height="9" viewBox="0 0 9 9"><path d="M0.8 0.8L8.2 8.2M8.2 0.8L0.8 8.2" stroke="#15428b" stroke-width="1.8"/></svg>
<svg class="a" style="left:1677px;top:184px;" width="8" height="5" viewBox="0 0 8 5"><path d="M0 0H8L4 4.5Z" fill="#15428b"/></svg>
<svg class="a" style="left:1696px;top:182px;" width="9" height="9" viewBox="0 0 9 9"><path d="M0.8 0.8L8.2 8.2M8.2 0.8L0.8 8.2" stroke="#15428b" stroke-width="1.8"/></svg>
<svg class="a" style="left:276px;top:177px;" width="194" height="23" viewBox="0 0 194 23"><path d="M0.5 22.5L21 1.5Q23 0.5 25 0.5H189Q192.5 0.5 192.5 4V23.5" fill="url(#tabg)" stroke="#6f9ad6"/><defs><linearGradient id="tabg" x1="0" y1="0" x2="0" y2="1"><stop offset="0" stop-color="#f5f8fd"/><stop offset="1" stop-color="#e6eef9"/></linearGradient></defs></svg>
<div class="a" style="left:270px;top:198px;width:7px;height:1px;background:#6f9ad6"></div>
<div class="a" style="left:277px;top:198px;width:191px;height:5px;background:#eaf1fb"></div>
<div class="t" style="left:298px;top:183px;font-size:11.3px;color:#15428b">Scenario Editor(RedGensis)</div>
<div class="a" style="left:451px;top:183px;width:12px;height:11px;border:1px solid #7b96bd;background:#f3f7fc"></div>
<svg class="a" style="left:454px;top:186px;" width="6" height="6" viewBox="0 0 6 6"><path d="M0.5 0.5L5.5 5.5M5.5 0.5L0.5 5.5" stroke="#3b5a88" stroke-width="1.2"/></svg>
<div class="a" style="left:361px;top:349px;width:322px;height:104px;background:#c27f2c;border:1px solid #4a4030;border-radius:7px"></div>
<div class="t" style="left:502px;top:358px;font-size:12px;color:#1a1a1a">Mission</div>
<div class="a" style="left:367px;top:377px;width:310px;height:21px;border:1.5px solid #222;border-radius:4px"></div>
<div class="t" style="left:372px;top:381px;font-size:12px;color:#1a1a1a">M1Start</div>
<div class="t" style="left:505px;top:403px;font-size:12px;color:#1a1a1a">World:</div>
<div class="a" style="left:367px;top:422px;width:310px;height:19px;border:1.5px solid #f6ead6;border-radius:4px"></div>
<div class="t" style="left:391px;top:426px;font-size:11px;color:#1a1a1a">Scenarios\RedGensis\Worlds\Mission01\Sandbox.sbc</div>
<svg class="a" style="left:678px;top:382px;" width="10" height="10" viewBox="0 0 10 10"><circle cx="5" cy="5" r="4" fill="#4b8fd3" stroke="#2b3a50" stroke-width="1"/></svg>
<svg class="a" style="left:682px;top:390px;" width="150" height="22" viewBox="0 0 150 22"><path d="M1 11H22M126 11H140" stroke="#1a1a1a" stroke-width="1.2"/><path d="M140 6.5L148 11L140 15.5Z" fill="none" stroke="#1a1a1a" stroke-width="1.2"/><rect x="22.5" y="2.5" width="103" height="18" fill="#7a7a7a" stroke="#1e1e1e" stroke-width="1.2"/></svg>
<div class="t" style="left:712px;top:396px;font-size:11.2px;color:#111;font-weight:bold;letter-spacing:-0.35px">Mission Complete</div>
<div class="a" style="left:831px;top:351px;width:323px;height:103px;background:#a9a9a9;border:1px solid #4a4a4a;border-radius:7px"></div>
<div class="t" style="left:972px;top:359px;font-size:12px;color:#1a1a1a">Mission</div>
<div class="a" style="left:836px;top:377px;width:312px;height:21px;border:1.5px solid #222;border-radius:4px"></div>
<div class="t" style="left:841px;top:381px;font-size:13.5px;color:#1a1a1a">M2Start</div>
<div class="t" style="left:975px;top:404px;font-size:12px;color:#1a1a1a">World:</div>
<div class="a" style="left:836px;top:423px;width:312px;height:19px;border:1.5px solid #eeeeee;border-radius:4px"></div>
<div class="t" style="left:860px;top:427px;font-size:11px;color:#1a1a1a">Scenarios\RedGensis\Worlds\Mission02\Sandbox.sbc</div>
<svg class="a" style="left:1150px;top:383px;" width="10" height="10" viewBox="0 0 10 10"><circle cx="5" cy="5" r="4" fill="#000"/></svg>
<div class="a" style="left:1423px;top:224px;width:269px;height:588px;border:1px solid #95b8e6;border-radius:3px;box-shadow:inset 1px 1px 0 #eef5fd"></div>
<div class="a" style="left:1432px;top:216px;width:58px;height:14px;background:#bfdbff"></div>
<div class="t" style="left:1435px;top:217px;font-size:12px;color:#1e1e1e">Properties</div>
<div class="t" style="left:1431px;top:240px;font-size:11.5px;color:#1e1e1e">Name:</div>
<div class="a" style="left:1534px;top:237px;width:154px;height:19px;background:#c8c8c8;border:1px solid #bcd0ea"></div>
<div class="t" style="left:1537px;top:240px;font-size:12px;color:#111">RedGensis</div>
<div class="t" style="left:1431px;top:265px;font-size:11.5px;color:#1e1e1e">Difficulty:</div>
<div class="a" style="left:1534px;top:261px;width:154px;height:20px;background:#fff;border:1px solid #a9c4e8"></div>
<div class="a" style="left:1671px;top:262px;width:16px;height:18px;background:#e2ecf8"></div>
<svg class="a" style="left:1675px;top:269px;" width="7" height="4" viewBox="0 0 7 4"><path d="M0 0H7L3.5 3.5Z" fill="#15428b"/></svg>
<div class="t" style="left:1537px;top:265px;font-size:12px;color:#111">Normal</div>
<div class="t" style="left:1431px;top:290px;font-size:11.5px;color:#1e1e1e">Image:</div>
<div class="a" style="left:1534px;top:286px;width:117px;height:19px;background:#c8c8c8"></div>
<div class="a" style="left:1534px;top:286px;width:116px;height:19px;overflow:hidden"><div class="t" style="left:3px;top:4px;font-size:11.6px;color:#7c7c7c">Scenarios\RedGensis\</div></div>
<div class="a" style="left:1655px;top:286px;width:33px;height:20px;border:1px solid #7d98bf;border-radius:3px;background:linear-gradient(#eef3fb 0,#e6eef9 50%,#d6e3f3 51%,#e0eaf6 100%)"></div>
<div class="t" style="left:1667px;top:292px;font-size:9px;color:#15428b;font-weight:bold">...</div>
<div class="t" style="left:1431px;top:315px;font-size:11.5px;color:#1e1e1e">Description:</div>
<div class="a" style="left:1534px;top:311px;width:154px;height:68px;background:#fff;border:1px solid #a9c4e8"></div>
<div class="t" style="left:1540px;top:316px;font-size:11.2px;color:#111">This is template scenario</div>
<div class="t" style="left:1540px;top:329px;font-size:11.2px;color:#111">description.</div>
<div class="t" style="left:1431px;top:390px;font-size:11.5px;color:#1e1e1e">Multiplayer:</div>
<div class="a" style="left:1535px;top:387px;width:13px;height:13px;border:1px solid #1f3b66;background:linear-gradient(135deg,#d9dfe8,#f4f6f9)"></div>
<div class="t" style="left:1431px;top:415px;font-size:11.5px;color:#1e1e1e">Menu Localization:</div>
<div class="a" style="left:1534px;top:411px;width:154px;height:21px;border:1px solid #7d98bf;border-radius:3px;background:linear-gradient(#eef3fb 0,#e6eef9 50%,#d6e3f3 51%,#e0eaf6 100%)"></div>
<div class="t" style="left:1605px;top:418px;font-size:9px;color:#15428b;font-weight:bold">...</div>
<div class="t" style="left:1431px;top:442px;font-size:11.5px;color:#1e1e1e">Localization:</div>
<div class="a" style="left:1431px;top:469px;width:254px;height:23px;border:1px solid #7d98bf;border-radius:3px;background:linear-gradient(#eef3fb 0,#e6eef9 50%,#d6e3f3 51%,#e0eaf6 100%)"></div>
<div class="t" style="left:1534px;top:474px;font-size:12px;color:#15428b">Add path</div>
<div class="t" style="left:1434px;top:501px;font-size:11.5px;color:#111;letter-spacing:-0.192px">Scenarios\RedGensis\Localization</div>
<div class="a" style="left:1671px;top:498px;width:14px;height:19px;border:1px solid #7d98bf;border-radius:2px;background:linear-gradient(#eef3fb 0,#e6eef9 50%,#d6e3f3 51%,#e0eaf6 100%)"></div>
<div class="t" style="left:1674px;top:502px;font-size:11.5px;color:#3b5a88">X</div>
<div class="a" style="left:1692px;top:859px;width:17px;height:155px;background:#cfdff3"></div>
<svg class="a" style="left:1696px;top:863px;" width="9" height="5" viewBox="0 0 9 5"><path d="M0 4.5H9L4.5 0Z" fill="#414d66"/></svg>
<div class="a" style="left:1693px;top:988px;width:16px;height:10px;border:1px solid #7f99c0;border-radius:2px;background:#e4edf8"></div>
<svg class="a" style="left:1697px;top:991px;" width="8" height="4" viewBox="0 0 8 4"><path d="M0 0.5H8M0 2.5H8" stroke="#7f99c0"/></svg>
<svg class="a" style="left:1696px;top:1002px;" width="9" height="5" viewBox="0 0 9 5"><path d="M0 0H9L4.5 4.5Z" fill="#414d66"/></svg>
<div class="a" style="left:266px;top:1012px;width:1424px;height:2px;background:#ffefd6"></div>
<div class="a" style="left:267px;top:1014px;width:1425px;height:17px;background:#cfdff3"></div>
<svg class="a" style="left:273px;top:1018px;" width="5" height="9" viewBox="0 0 5 9"><path d="M5 0V9L0 4.5Z" fill="#414d66"/></svg>
<div class="a" style="left:285px;top:1014px;width:1049px;height:17px;border:1px solid #7f99c0;border-radius:3px;background:linear-gradient(#e6eef9 0,#e6eef9 45%,#d6e3f3 46%,#dbe6f5 100%);box-shadow:inset 0 0 0 1px #fff"></div>
<svg class="a" style="left:806px;top:1018px;" width="6" height="8" viewBox="0 0 6 8"><path d="M0.5 0V8M2.5 0V8M4.5 0V8" stroke="#7f99c0"/></svg>
<svg class="a" style="left:1681px;top:1018px;" width="5" height="9" viewBox="0 0 5 9"><path d="M0 0V9L5 4.5Z" fill="#414d66"/></svg>
<div class="a" style="left:1692px;top:1014px;width:17px;height:17px;background:#fff"></div>
<div class="a" style="left:1717px;top:1014px;width:196px;height:17px;background:#cfdff3"></div>
<svg class="a" style="left:1723px;top:1018px;" width="5" height="9" viewBox="0 0 5 9"><path d="M5 0V9L0 4.5Z" fill="#414d66"/></svg>
<div class="a" style="left:1734px;top:1014px;width:157px;height:17px;border:1px solid #7f99c0;border-radius:3px;background:linear-gradient(#e6eef9 0,#e6eef9 45%,#d6e3f3 46%,#dbe6f5 100%);box-shadow:inset 0 0 0 1px #fff"></div>
<svg class="a" style="left:1810px;top:1018px;" width="6" height="8" viewBox="0 0 6 8"><path d="M0.5 0V8M2.5 0V8M4.5 0V8" stroke="#7f99c0"/></svg>
<svg class="a" style="left:1902px;top:1018px;" width="5" height="9" viewBox="0 0 5 9"><path d="M0 0V9L5 4.5Z" fill="#414d66"/></svg>
<svg class="a" style="left:124px;top:906px;" width="15" height="2" viewBox="0 0 15 2"><rect x="1" y="0" width="1" height="1" fill="#1f5fc8"/><rect x="0" y="1" width="1" height="1" fill="#1f5fc8"/><rect x="4" y="0" width="1" height="1" fill="#1f5fc8"/><rect x="3" y="1" width="1" height="1" fill="#1f5fc8"/><rect x="7" y="0" width="1" height="1" fill="#1f5fc8"/><rect x="6" y="1" width="1" height="1" fill="#1f5fc8"/><rect x="10" y="0" width="1" height="1" fill="#1f5fc8"/><rect x="9" y="1" width="1" height="1" fill="#1f5fc8"/><rect x="13" y="0" width="1" height="1" fill="#1f5fc8"/><rect x="12" y="1" width="1" height="1" fill="#1f5fc8"/></svg>
<svg class="a" style="left:978px;top:831px;" width="15" height="2" viewBox="0 0 15 2"><rect x="1" y="0" width="1" height="1" fill="#1f5fc8"/><rect x="0" y="1" width="1" height="1" fill="#1f5fc8"/><rect x="4" y="0" width="1" height="1" fill="#1f5fc8"/><rect x="3" y="1" width="1" height="1" fill="#1f5fc8"/><rect x="7" y="0" width="1" height="1" fill="#1f5fc8"/><rect x="6" y="1" width="1" height="1" fill="#1f5fc8"/><rect x="10" y="0" width="1" height="1" fill="#1f5fc8"/><rect x="9" y="1" width="1" height="1" fill="#1f5fc8"/><rect x="13" y="0" width="1" height="1" fill="#1f5fc8"/><rect x="12" y="1" width="1" height="1" fill="#1f5fc8"/></svg>
<svg class="a" style="left:262px;top:594px;" width="3" height="20" viewBox="0 0 3 20"><rect x="1" y="0" width="2" height="1" fill="#1f5fc8"/><rect x="0" y="1" width="1" height="2" fill="#1f5fc8"/><rect x="1" y="2" width="1" height="1" fill="#fff"/><rect x="1" y="4" width="2" height="1" fill="#1f5fc8"/><rect x="0" y="5" width="1" height="2" fill="#1f5fc8"/><rect x="1" y="6" width="1" height="1" fill="#fff"/><rect x="1" y="8" width="2" height="1" fill="#1f5fc8"/><rect x="0" y="9" width="1" height="2" fill="#1f5fc8"/><rect x="1" y="10" width="1" height="1" fill="#fff"/><rect x="1" y="12" width="2" height="1" fill="#1f5fc8"/><rect x="0" y="13" width="1" height="2" fill="#1f5fc8"/><rect x="1" y="14" width="1" height="1" fill="#fff"/><rect x="1" y="16" width="2" height="1" fill="#1f5fc8"/><rect x="0" y="17" width="1" height="2" fill="#1f5fc8"/><rect x="1" y="18" width="1" height="1" fill="#fff"/></svg>
<svg class="a" style="left:1711px;top:594px;" width="3" height="20" viewBox="0 0 3 20"><rect x="1" y="0" width="2" height="1" fill="#1f5fc8"/><rect x="0" y="1" width="1" height="2" fill="#1f5fc8"/><rect x="1" y="2" width="1" height="1" fill="#fff"/><rect x="1" y="4" width="2" height="1" fill="#1f5fc8"/><rect x="0" y="5" width="1" height="2" fill="#1f5fc8"/><rect x="1" y="6" width="1" height="1" fill="#fff"/><rect x="1" y="8" width="2" height="1" fill="#1f5fc8"/><rect x="0" y="9" width="1" height="2" fill="#1f5fc8"/><rect x="1" y="10" width="1" height="1" fill="#fff"/><rect x="1" y="12" width="2" height="1" fill="#1f5fc8"/><rect x="0" y="13" width="1" height="2" fill="#1f5fc8"/><rect x="1" y="14" width="1" height="1" fill="#fff"/><rect x="1" y="16" width="2" height="1" fill="#1f5fc8"/><rect x="0" y="17" width="1" height="2" fill="#1f5fc8"/><rect x="1" y="18" width="1" height="1" fill="#fff"/></svg>
<svg class="a" style="left:16px;top:1052px;" width="17" height="17" viewBox="0 0 17 17"><path d="M0 2.3L7 1.3V8H0Z M8 1.1L17 0V8H8Z M0 9H7V15.7L0 14.7Z M8 9H17V17L8 15.9Z" fill="#fff"/></svg>
<svg class="a" style="left:63px;top:1052px;" width="18" height="16" viewBox="0 0 18 16"><rect x="2.5" y="3.5" width="10" height="9" fill="none" stroke="#fff" stroke-width="1.2"/><path d="M1 1.5H14M1 14.5H14M15.5 4V12M17.5 1V15" stroke="#fff" stroke-width="1.2"/></svg>
<div class="a" style="left:246px;top:1040px;width:48px;height:40px;background:#3d3d3f"></div>
<div class="a" style="left:103px;top:1078px;width:40px;height:2px;background:#76dfe8"></div>
<div class="a" style="left:152px;top:1078px;width:40px;height:2px;background:#76dfe8"></div>
<div class="a" style="left:201px;top:1078px;width:40px;height:2px;background:#76dfe8"></div>
<div class="a" style="left:246px;top:1078px;width:48px;height:2px;background:#76dfe8"></div>
<div class="a" style="left:299px;top:1078px;width:40px;height:2px;background:#76dfe8"></div>
<div class="a" style="left:348px;top:1078px;width:40px;height:2px;background:#76dfe8"></div>
<svg class="a" style="left:111px;top:1048px;" width="24" height="24" viewBox="0 0 24 24"><circle cx="12" cy="12" r="11.5" fill="#dc4437"/><path d="M12 12L22 6.3A11.5 11.5 0 0 1 12 23.5Z" fill="#fcc934"/><path d="M12 12L12 23.5A11.5 11.5 0 0 1 1.5 6.5Z" fill="#1ea362"/><path d="M12 12L1.5 6.5A11.5 11.5 0 0 1 22 6.3Z" fill="#dc4437"/><circle cx="12" cy="12" r="5.2" fill="#fff"/><circle cx="12" cy="12" r="4.2" fill="#4285f4"/></svg>
<svg class="a" style="left:160px;top:1052px;" width="24" height="18" viewBox="0 0 24 18"><path d="M0 2Q0 0 2 0H9L11 2H22Q24 2 24 4V16Q24 18 22 18H2Q0 18 0 16Z" fill="#f5c243"/><path d="M0 6H24V16Q24 18 22 18H2Q0 18 0 16Z" fill="#ffd75e"/><rect x="6" y="12" width="12" height="7" fill="#2f80d0"/><rect x="9" y="14" width="6" height="5" fill="#ffd75e"/></svg>
<div class="a" style="left:209px;top:1048px;width:24px;height:24px;background:linear-gradient(#fff,#ddd);border-radius:2px"></div>
<svg class="a" style="left:209px;top:1048px;" width="24" height="24" viewBox="0 0 24 24"><path d="M10 5Q12 3 14 5V9Q16 10 15 14L14 21H10L9 14Q8 10 10 9Z" fill="#111"/><path d="M14 7L17 3" stroke="#111" stroke-width="1.5"/></svg>
<svg class="a" style="left:257px;top:1047px;" width="24" height="25" viewBox="0 0 24 25"><path d="M2 3L8 1L12 4L21 3V22L4 23Z" fill="#2e2e2e"/><text x="3" y="17" font-family="Liberation Sans" font-weight="bold" font-size="11" fill="#8d93a3">VR</text><text x="4" y="23" font-family="Liberation Sans" font-size="5" fill="#8d93a3">Editor</text></svg>
<svg class="a" style="left:307px;top:1048px;" width="24" height="24" viewBox="0 0 24 24"><circle cx="12" cy="12" r="12" fill="#3fb07c"/><circle cx="12" cy="12" r="10.5" fill="#46c08a"/><ellipse cx="12" cy="12" rx="8" ry="3" fill="none" stroke="#e8fff4" stroke-width="1.1"/><ellipse cx="12" cy="12" rx="8" ry="3" fill="none" stroke="#e8fff4" stroke-width="1.1" transform="rotate(60 12 12)"/><ellipse cx="12" cy="12" rx="8" ry="3" fill="none" stroke="#e8fff4" stroke-width="1.1" transform="rotate(-60 12 12)"/><circle cx="12" cy="12" r="1.5" fill="#e8fff4"/></svg>
<svg class="a" style="left:355px;top:1048px;" width="26" height="24" viewBox="0 0 26 24"><rect x="1" y="10" width="22" height="12" fill="#dce8f5" stroke="#9fb4c8"/><rect x="3" y="13" width="16" height="5" fill="#4a6fa5"/><path d="M15 2L18 5L22 2L25 6V12H14Z" fill="#b8b8b8"/><circle cx="18" cy="8" r="1.3" fill="#222"/><circle cx="22" cy="8" r="1.3" fill="#222"/></svg>
<svg class="a" style="left:1731px;top:1057px;" width="12" height="7" viewBox="0 0 12 7"><path d="M0.8 6.2L6 1L11.2 6.2" stroke="#fff" stroke-width="1.2" fill="none"/></svg>
<svg class="a" style="left:1752px;top:1053px;" width="18" height="16" viewBox="0 0 18 16"><rect x="4.5" y="1.5" width="12" height="9" fill="none" stroke="#fff" stroke-width="1.1"/><path d="M10.5 10.5V13.5M6 14.5H15" stroke="#fff" stroke-width="1.1"/><rect x="0.5" y="2.5" width="4" height="3.5" fill="#1f2125" stroke="#fff" stroke-width="1"/><path d="M2.5 6V15" stroke="#fff" stroke-width="1"/></svg>
<svg class="a" style="left:1776px;top:1053px;" width="18" height="15" viewBox="0 0 18 15"><path d="M1 5H4L8 1V14L4 10H1Z" fill="none" stroke="#fff" stroke-width="1.1"/><path d="M10.5 5Q12 7.5 10.5 10M12.8 3Q15.5 7.5 12.8 12M15 1Q19 7.5 15 14" stroke="#fff" stroke-width="1.1" fill="none"/></svg>
<div class="t" style="left:1818.5px;top:1045px;font-size:12px;color:#fff;letter-spacing:-0.706px">19:12</div>
<div class="t" style="left:1803px;top:1062.5px;font-size:12px;color:#fff;letter-spacing:-0.306px">24/01/2021</div>
<svg class="a" style="left:1878px;top:1052px;" width="18" height="17" viewBox="0 0 18 17"><path d="M0.6 0.6H16.4V12.4H11L8.5 15.5L6 12.4H0.6Z" fill="none" stroke="#fff" stroke-width="1.2"/></svg>
<div class="a" style="left:1915px;top:1040px;width:1px;height:40px;background:#6a6a6a"></div>
<svg class="a" style="left:0;top:0" width="0" height="0"><defs><filter id="sh" x="-20%" y="-20%" width="150%" height="150%"><feGaussianBlur in="SourceAlpha" stdDeviation="0.7"/><feOffset dx="1" dy="1.2"/><feComponentTransfer><feFuncA type="linear" slope="0.45"/></feComponentTransfer><feMerge><feMergeNode/><feMergeNode in="SourceGraphic"/></feMerge></filter><linearGradient id="yel" x1="0" y1="0" x2="0" y2="1"><stop offset="0" stop-color="#ffe23a"/><stop offset="1" stop-color="#f4a417"/></linearGradient><linearGradient id="paper" x1="0" y1="0" x2="1" y2="1"><stop offset="0" stop-color="#ffffff"/><stop offset="1" stop-color="#c9d0da"/></linearGradient><linearGradient id="blu" x1="0" y1="0" x2="1" y2="1"><stop offset="0" stop-color="#3d74e0"/><stop offset="1" stop-color="#1f3fa8"/></linearGradient><radialGradient id="glass" cx="0.4" cy="0.35" r="0.7"><stop offset="0" stop-color="#e8eef5"/><stop offset="1" stop-color="#8aa3bd"/></radialGradient><linearGradient id="fig" x1="0" y1="0" x2="0" y2="1"><stop offset="0" stop-color="#5b8fdb"/><stop offset="1" stop-color="#2f5cb0"/></linearGradient></defs></svg>
<svg class="a" style="left:14px;top:84px;" width="30" height="32" viewBox="0 0 30 32"><g filter="url(#sh)"><path d="M3 6L20 2.5L25.5 27L7.5 30Z" fill="url(#paper)" stroke="#b9c2cd" stroke-width="0.6"/><path d="M2.5 4.5L19 1L20.5 6L3.5 9Z" fill="url(#yel)"/><path d="M4.5 11.0L21.0 8.0" stroke="#aab4c2" stroke-width="1"/><path d="M4.95 14.2L21.5 11.1" stroke="#aab4c2" stroke-width="1"/><path d="M5.4 17.4L22.0 14.2" stroke="#aab4c2" stroke-width="1"/><path d="M5.85 20.6L22.5 17.3" stroke="#aab4c2" stroke-width="1"/><path d="M6.3 23.8L23.0 20.4" stroke="#aab4c2" stroke-width="1"/><path d="M6.75 27.0L23.5 23.5" stroke="#aab4c2" stroke-width="1"/></g></svg>
<svg class="a" style="left:48px;top:84px;" width="30" height="32" viewBox="0 0 30 32"><g filter="url(#sh)"><path d="M2 3L21 0.5L24 27L5.5 30Z" fill="url(#yel)"/><path d="M21 2L24 3V8L22 8Z" fill="#e0203a"/><path d="M22 8L24.5 8.5V14L22.5 14Z" fill="#2ec4d8"/><path d="M22.5 14L25 14.5V19L23 19Z" fill="#3cb83c"/><path d="M23 19L25.5 19.5V25L23.5 25Z" fill="#f08a1a"/><path d="M13 5L20 13H16.5L17 21H10L9.5 13H6Z" fill="#22a51e"/></g></svg>
<svg class="a" style="left:99px;top:83px;" width="30" height="32" viewBox="0 0 30 32"><g filter="url(#sh)"><path d="M2 3L21 0.5L24 27L5.5 30Z" fill="url(#yel)"/><path d="M21 2L24 3V8L22 8Z" fill="#e0203a"/><path d="M22 8L24.5 8.5V14L22.5 14Z" fill="#2ec4d8"/><path d="M22.5 14L25 14.5V19L23 19Z" fill="#3cb83c"/><path d="M5 6L11 3V5Q21 6 20 17Q19 24 13 25Q17 20 16 15Q15 10 11 9.5V12Z" fill="#26a52a"/><circle cx="10.5" cy="17" r="5.6" fill="#cfe4fa" stroke="#2f78d0" stroke-width="1.6"/><path d="M10.5 17L12.5 13.5M10.5 17L8 19.5" stroke="#222" stroke-width="1.2"/></g></svg>
<svg class="a" style="left:150px;top:99px;" width="7" height="4" viewBox="0 0 7 4"><path d="M0 0H7L3.5 3.5Z" fill="#15428b"/></svg>
<svg class="a" style="left:164px;top:86px;" width="30" height="32" viewBox="0 0 30 32"><g filter="url(#sh)"><path d="M1 3L23 0.5L26 25L3.5 27.5Z" fill="url(#blu)"/><path d="M3.5 3.5L21 1.5L22.5 15L5 17Z" fill="#fff"/><path d="M4.5 5.5L21.0 3.6" stroke="#e85a5a" stroke-width="0.9"/><path d="M4.67 7.8L21.17 5.9" stroke="#e85a5a" stroke-width="0.9"/><path d="M4.84 10.1L21.34 8.2" stroke="#e85a5a" stroke-width="0.9"/><path d="M5.01 12.399999999999999L21.51 10.5" stroke="#e85a5a" stroke-width="0.9"/><path d="M5.18 14.7L21.68 12.799999999999999" stroke="#e85a5a" stroke-width="0.9"/><path d="M7 18.5L18 17.3L19 26L8 27Z" fill="#dfe3ea"/><rect x="9" y="19.5" width="2.5" height="5" fill="#2a4fb8" transform="skewY(-6)"/></g></svg>
<svg class="a" style="left:202px;top:86px;" width="30" height="32" viewBox="0 0 30 32"><g filter="url(#sh)"><path d="M1 3L23 0.5L26 25L3.5 27.5Z" fill="url(#blu)"/><path d="M3.5 3.5L21 1.5L22.5 15L5 17Z" fill="#fff"/><path d="M4.5 5.5L21.0 3.6" stroke="#e85a5a" stroke-width="0.9"/><path d="M4.67 7.8L21.17 5.9" stroke="#e85a5a" stroke-width="0.9"/><path d="M4.84 10.1L21.34 8.2" stroke="#e85a5a" stroke-width="0.9"/><path d="M5.01 12.399999999999999L21.51 10.5" stroke="#e85a5a" stroke-width="0.9"/><path d="M5.18 14.7L21.68 12.799999999999999" stroke="#e85a5a" stroke-width="0.9"/><path d="M7 18.5L18 17.3L19 26L8 27Z" fill="#dfe3ea"/><rect x="9" y="19.5" width="2.5" height="5" fill="#2a4fb8" transform="skewY(-6)"/></g><g filter="url(#sh)"><path d="M21 3.5L25.5 6L12 27.5L9.5 26Z" fill="#7ed23a"/><path d="M21 3.5Q23 0 26 2Q27.5 4 25.5 6Z" fill="#e01818"/><path d="M9.5 26L12 27.5L9 29.5Z" fill="#f0d050"/><path d="M9.3 28.5L9 29.5L10 29Z" fill="#111"/></g></svg>
<svg class="a" style="left:240px;top:91px;" width="32" height="18" viewBox="0 0 32 18"><g filter="url(#sh)"><path d="M1 8.5Q15 -3 29 8.5Q15 20 1 8.5Z" fill="#a9d8ee"/><circle cx="15" cy="8.5" r="7" fill="#2a62cc"/><circle cx="15" cy="8.5" r="4.2" fill="#06124a"/><circle cx="13.5" cy="6.8" r="1.5" fill="#fff"/></g></svg>
<svg class="a" style="left:276px;top:88px;" width="28" height="28" viewBox="0 0 28 28"><g filter="url(#sh)"><path d="M3 3L22 22M22 3L3 22" stroke="#e01010" stroke-width="4.2"/></g></svg>
<svg class="a" style="left:325px;top:88px;" width="24" height="28" viewBox="0 0 24 28"><g filter="url(#sh)"><path d="M2 6L9 0V3.5Q20 3.5 20 14.5Q20 25 9 25H1V20H9Q14.5 20 14.5 14.5Q14.5 9 9 9V12Z" fill="#c3c3c3"/></g></svg>
<svg class="a" style="left:359px;top:88px;" width="24" height="28" viewBox="0 0 24 28"><g transform="translate(21 0) scale(-1 1)"><g filter="url(#sh)"><path d="M2 6L9 0V3.5Q20 3.5 20 14.5Q20 25 9 25H1V20H9Q14.5 20 14.5 14.5Q14.5 9 9 9V12Z" fill="#c3c3c3"/></g></g></svg>
<svg class="a" style="left:386px;top:90px;" width="36" height="26" viewBox="0 0 36 26"><g filter="url(#sh)"><path d="M11 2.2H9Q5.6 2.2 5.6 5.5V9.2Q5.6 12 2.6 12Q5.6 12 5.6 14.8V18.5Q5.6 21.8 9 21.8H11" fill="none" stroke="#fff" stroke-width="3.2"/><path d="M23 2.2H25Q28.4 2.2 28.4 5.5V9.2Q28.4 12 31.4 12Q28.4 12 28.4 14.8V18.5Q28.4 21.8 25 21.8H23" fill="none" stroke="#fff" stroke-width="3.2"/><circle cx="16.4" cy="11.6" r="6.3" fill="url(#glass)" stroke="#1a78dc" stroke-width="2.2"/><path d="M21.5 15L30 19.5" stroke="#1a8ae6" stroke-width="3.2" stroke-linecap="round"/></g></svg>
<svg class="a" style="left:490px;top:90px;" width="36" height="26" viewBox="0 0 36 26"><g filter="url(#sh)"><path d="M11 2.2H9Q5.6 2.2 5.6 5.5V9.2Q5.6 12 2.6 12Q5.6 12 5.6 14.8V18.5Q5.6 21.8 9 21.8H11" fill="none" stroke="#fff" stroke-width="3.2"/><path d="M23 2.2H25Q28.4 2.2 28.4 5.5V9.2Q28.4 12 31.4 12Q28.4 12 28.4 14.8V18.5Q28.4 21.8 25 21.8H23" fill="none" stroke="#fff" stroke-width="3.2"/><circle cx="16.4" cy="11.6" r="6.3" fill="url(#glass)" stroke="#1a78dc" stroke-width="2.2"/><path d="M21.5 15L30 19.5" stroke="#1a8ae6" stroke-width="3.2" stroke-linecap="round"/></g></svg>
<svg class="a" style="left:435px;top:87px;" width="30" height="28" viewBox="0 0 30 28"><g filter="url(#sh)"><path d="M1.5 7V25H26.5V7" fill="none" stroke="#1c1414" stroke-width="2.6"/><rect x="4" y="19" width="20" height="5" fill="#1e8ae6"/><path d="M9 19V24M14 19V24M19 19V24" stroke="#6cc0f8" stroke-width="0.6"/><rect x="7" y="14" width="5" height="5" fill="#2194ee"/><rect x="16" y="14" width="5" height="5" fill="#2194ee"/><path d="M11 1H17V8H20.5L14 14.5L7.5 8H11Z" fill="#7ed60e"/></g></svg>
<svg class="a" style="left:567px;top:85px;" width="30" height="31" viewBox="0 0 30 31"><g filter="url(#sh)"><path d="M2 3.5L22 1L25 26L5 28.5Z" fill="url(#paper)" stroke="#aab4c0" stroke-width="0.6"/><path d="M1.5 2L21.5 0L22.3 6L2.3 8Z" fill="url(#yel)"/><path d="M4.0 11L22.0 9" stroke="#c2ccd8" stroke-width="0.8"/><path d="M4.3 14L22.3 12" stroke="#c2ccd8" stroke-width="0.8"/><path d="M4.6 17L22.6 15" stroke="#c2ccd8" stroke-width="0.8"/><path d="M4.9 20L22.9 18" stroke="#c2ccd8" stroke-width="0.8"/><path d="M5.2 23L23.2 21" stroke="#c2ccd8" stroke-width="0.8"/><path d="M11.5 6.5H16V12.5H22V17H16V23H11.5V17H5.5V12.5H11.5Z" fill="#2fb52a" transform="rotate(-5 14 15)"/></g></svg>
<svg class="a" style="left:620px;top:84px;" width="34" height="34" viewBox="0 0 34 34"><g filter="url(#sh)"><path d="M5.5 2V30M16 2V30M26.5 2V30M2 5.4H30M2 15.8H30M2 26.4H30" stroke="#fff" stroke-width="1.2"/><path d="M7.4 23.8V14.5Q7.4 7.9 16 7.9Q24.8 7.9 24.8 14.5V23.8H19V15Q19 13.8 16 13.8Q13 13.8 13 15V23.8Z" fill="#3d2f30"/><rect x="7.4" y="18.8" width="5.6" height="5" fill="#e00000"/><rect x="19" y="18.8" width="5.8" height="5" fill="#e00000"/></g></svg>
<svg class="a" style="left:684px;top:84px;" width="32" height="32" viewBox="0 0 32 32"><g filter="url(#sh)"><circle cx="17.5" cy="4.4" r="3.7" fill="url(#fig)"/><g fill="none" stroke="url(#fig)" stroke-linecap="round" stroke-linejoin="round"><path d="M17 10L15 19.5" stroke-width="6"/><path d="M15 11L8.5 11.8L6.8 16.5" stroke-width="3.2"/><path d="M19 10.5L22 14.5L27.2 11.4" stroke-width="3.2"/><path d="M13.5 20L9 20.5L3 20" stroke-width="3.6"/><path d="M15.5 20L16.5 25L18.5 29" stroke-width="3.6"/></g><path d="M18 15.5L28 22.3L18 29.2Z" fill="#86d80c"/></g></svg>
<svg class="a" style="left:735px;top:84px;" width="32" height="32" viewBox="0 0 32 32"><g filter="url(#sh)"><circle cx="17.5" cy="4.4" r="3.7" fill="url(#fig)"/><g fill="none" stroke="url(#fig)" stroke-linecap="round" stroke-linejoin="round"><path d="M17 10L15 19.5" stroke-width="6"/><path d="M15 11L8.5 11.8L6.8 16.5" stroke-width="3.2"/><path d="M19 10.5L22 14.5L27.2 11.4" stroke-width="3.2"/><path d="M13.5 20L9 20.5L3 20" stroke-width="3.6"/><path d="M15.5 20L16.5 25L18.5 29" stroke-width="3.6"/></g><rect x="14.5" y="17" width="13.5" height="7" rx="1" fill="#40c8cc"/><rect x="20.5" y="25" width="9" height="5" rx="0.5" fill="#f8a832"/></g></svg>
<svg class="a" style="left:0px;top:0px;" width="48" height="48" viewBox="0 0 48 48"><g><path d="M6.5 18L15 11.5L20 14.5L23 22L19.5 37L12 37Z" fill="#2b2b2b"/><path d="M19 16L41 15V44L37.5 48L19 45Z" fill="#262626"/><path d="M29 16V45" stroke="#111" stroke-width="1"/><text x="8.5" y="40" font-family="Liberation Sans" font-weight="bold" font-size="23" fill="#878e9c" transform="scale(1 1)" letter-spacing="-2">VR</text><text x="10" y="46" font-family="Liberation Sans" font-weight="bold" font-size="9" fill="#2a2a2a" stroke="#2a2a2a" stroke-width="0.3" transform="rotate(7 22 43)">Editor</text></g></svg>
</body></html>
